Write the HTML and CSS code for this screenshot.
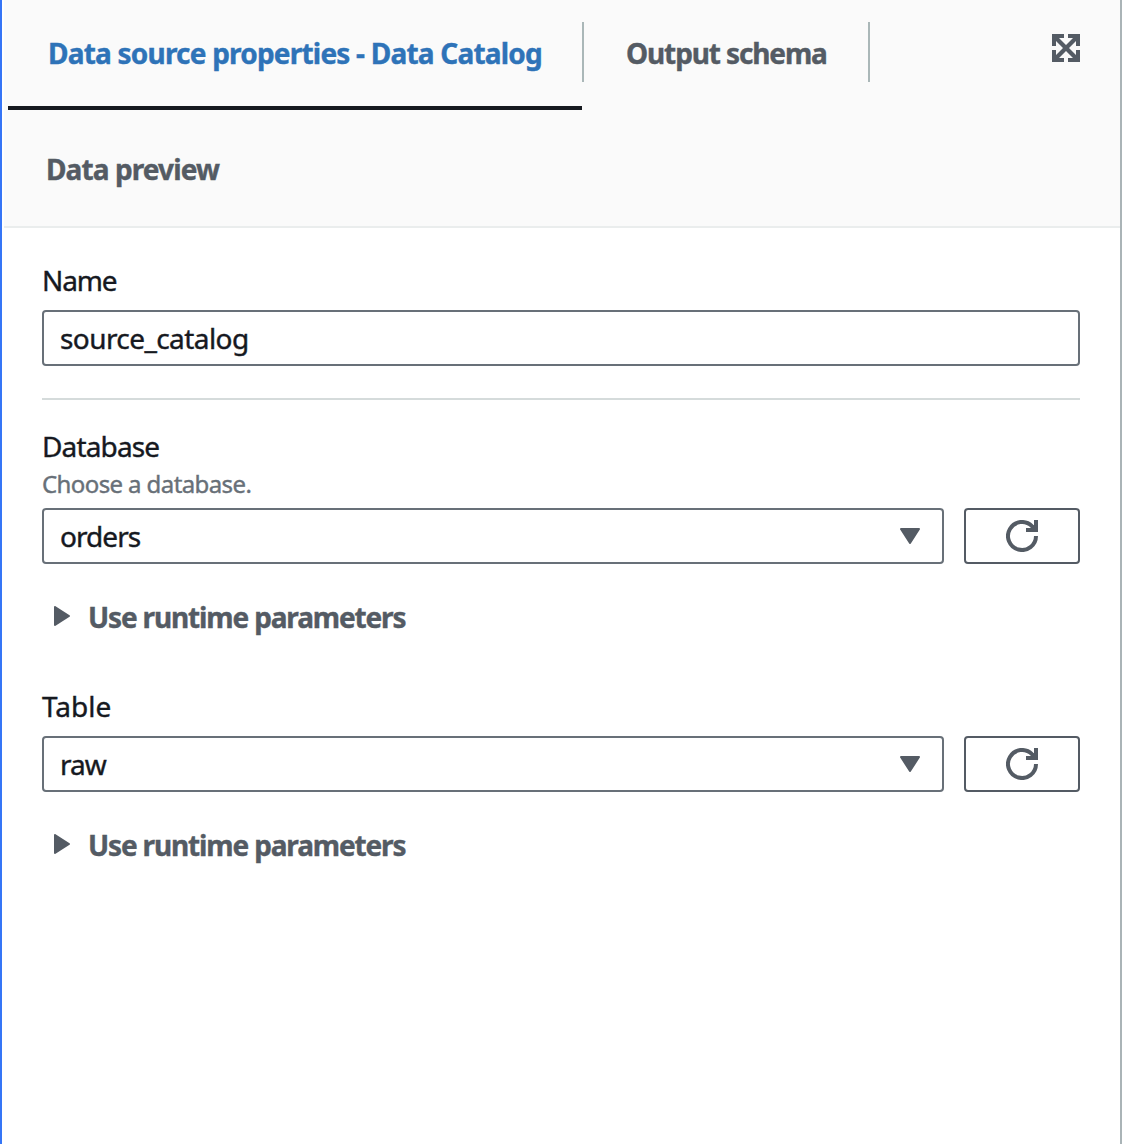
FILE: index.html
```html
<!DOCTYPE html>
<html lang="en">
<head>
<meta charset="utf-8">
<title>Data source properties</title>
<link rel="stylesheet" href="styles.css">
</head>
<body>
<main class="panel">
  <header class="header">
    <nav class="tabs">
      <div class="tab tab-active">Data source properties - Data Catalog</div>
      <div class="tab tab-schema">Output schema</div>
      <div class="tab tab-preview">Data preview</div>
    </nav>
    <svg class="expand" viewBox="0 0 28 28" width="28" height="28"><path d="M0 0H12V4H7L14 11L21 4H16V0H28V12H24V7L17 14L24 21V16H28V28H16V24H21L14 17L7 24H12V28H0V16H4V21L11 14L4 7V12H0Z" fill="currentColor"/></svg>
  </header>
  <form class="form">
    <label class="label name-label">Name</label>
    <div class="box name-value">source_catalog</div>
    <hr class="rule">
    <label class="label database-label">Database</label>
    <p class="hint">Choose a database.</p>
    <div class="row">
      <div class="box select"><span>orders</span><svg class="caret" viewBox="0 0 20 16" width="20" height="16"><path d="M1 1H19L10 15Z" fill="currentColor" stroke="currentColor" stroke-width="2" stroke-linejoin="round"/></svg></div>
      <button class="refresh" type="button" aria-label="Refresh databases"><svg viewBox="0 0 32 32" width="32" height="32"><path d="M30 16A14 14 0 1 1 26 6.200L29 9" fill="none" stroke="currentColor" stroke-width="4"/><path d="M28 0H32V12H20V8H25L28 5Z" fill="currentColor"/></svg></button>
    </div>
    <div class="expander"><svg viewBox="0 0 16 20" width="16" height="20"><path d="M1 1V19L15 10Z" fill="currentColor" stroke="currentColor" stroke-width="2" stroke-linejoin="round"/></svg><span>Use runtime parameters</span></div>
    <label class="label">Table</label>
    <div class="row table-row">
      <div class="box select"><span>raw</span><svg class="caret" viewBox="0 0 20 16" width="20" height="16"><path d="M1 1H19L10 15Z" fill="currentColor" stroke="currentColor" stroke-width="2" stroke-linejoin="round"/></svg></div>
      <button class="refresh" type="button" aria-label="Refresh tables"><svg viewBox="0 0 32 32" width="32" height="32"><path d="M30 16A14 14 0 1 1 26 6.200L29 9" fill="none" stroke="currentColor" stroke-width="4"/><path d="M28 0H32V12H20V8H25L28 5Z" fill="currentColor"/></svg></button>
    </div>
    <div class="expander"><svg viewBox="0 0 16 20" width="16" height="20"><path d="M1 1V19L15 10Z" fill="currentColor" stroke="currentColor" stroke-width="2" stroke-linejoin="round"/></svg><span>Use runtime parameters</span></div>
  </form>
</main>
</body>
</html>
```

FILE: styles.css
```css
* { box-sizing: border-box; }
body { margin: 0; background: #fff; color: #16191f; font: 28px/40px "Noto Sans", sans-serif; -webkit-text-stroke: 0.4px currentColor; }
.panel { width: 1122px; height: 1144px; border-left: 2px solid #3575f6; border-right: 2px solid #aab4b7; }
.header { display: flex; justify-content: space-between; height: 228px; margin-left: 2px; background: #fafafa; border-bottom: 2px solid #eaeded; color: #545b64; }
.tabs { display: flex; flex-wrap: wrap; width: 900px; padding-left: 4px; align-content: flex-start; font-weight: 700; white-space: nowrap; }
.tab { height: 110px; padding-top: 33px; }
.tab-active { width: 574px; padding-left: 40px; border-bottom: 4px solid #16191f; color: #2e73b8; letter-spacing: -0.79px; }
.tab-schema { width: 288px; height: 60px; margin-top: 22px; padding: 11px 0 0 42px; border: solid #aab7b8; border-width: 0 2px; letter-spacing: -1.12px; }
.tab-preview { width: 574px; padding: 39px 0 0 38px; letter-spacing: -0.9px; }
.expand { margin: 34px 40px 0 0; }
.form { padding: 32px 40px 0; }
.label { display: block; height: 40px; white-space: nowrap; }
.name-label { letter-spacing: -1.1px; }
.database-label { letter-spacing: -0.85px; }
.box { display: flex; align-items: center; justify-content: space-between; height: 56px; margin-top: 10px; padding: 0 22px 0 16px; border: 2px solid #687078; border-radius: 4px; }
.name-value { letter-spacing: -0.58px; }
.rule { height: 2px; margin: 32px 0 26px; border: 0; background: #d5dbdb; }
.hint { margin: 0; height: 40px; font-size: 24px; line-height: 36px; color: #687078; letter-spacing: -0.6px; }
.row { display: flex; gap: 20px; margin-top: 2px; }
.table-row { margin-top: 10px; }
.row .box { flex: 1; margin-top: 0; letter-spacing: -0.95px; }
.caret { color: #545b64; }
.refresh { width: 116px; height: 56px; padding: 0; display: flex; align-items: center; justify-content: center; background: #fff; border: 2px solid #545b64; border-radius: 4px; color: #545b64; }
.expander { display: flex; align-items: center; gap: 18px; height: 40px; margin: 32px 0 50px; padding-left: 12px; font-weight: 700; color: #545b64; letter-spacing: -1.15px; }
.expander span { padding-top: 2px; }
```
